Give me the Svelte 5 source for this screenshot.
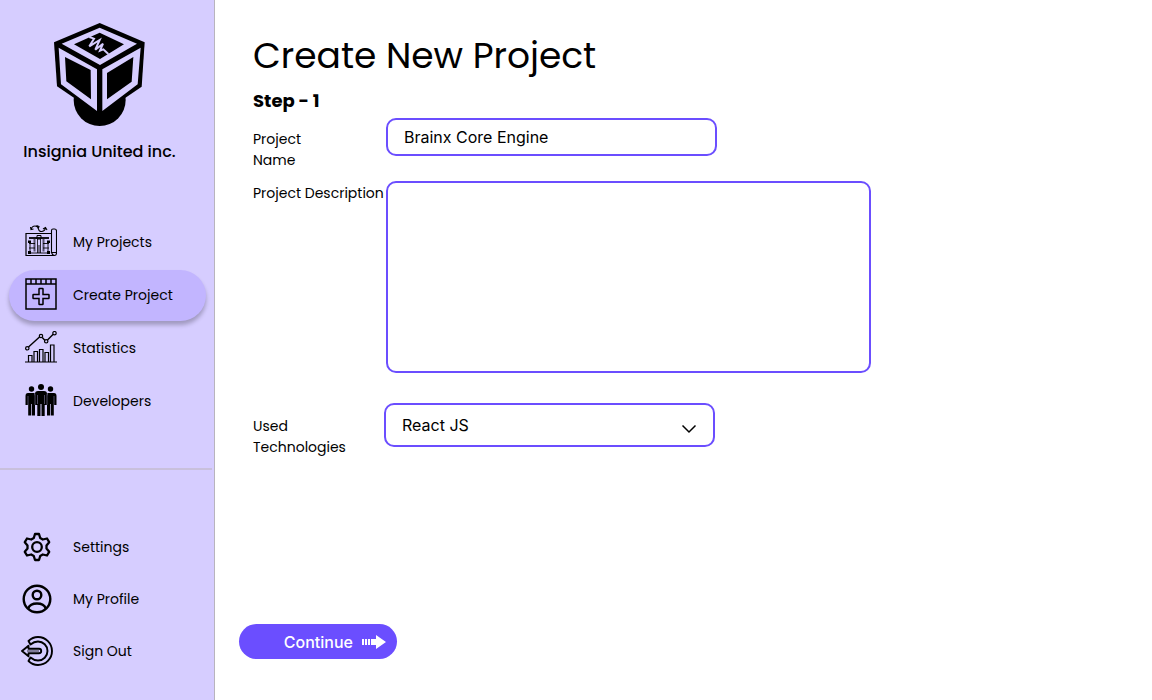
<script>
  let name = $state('Brainx Core Engine');
  let description = $state('');
  let technology = $state('React JS');
  const main = [
    { id: 'projects', label: 'My Projects' },
    { id: 'create', label: 'Create Project', active: true },
    { id: 'stats', label: 'Statistics' },
    { id: 'devs', label: 'Developers' }
  ];
  const account = [
    { id: 'settings', label: 'Settings' },
    { id: 'profile', label: 'My Profile' },
    { id: 'signout', label: 'Sign Out' }
  ];
</script>

{#snippet icon(id)}
  {#if id === 'projects'}
    <svg class="icon" viewBox="0 0 32 32" fill="none" stroke="#000">
      <path d="M26 8.500H1v22h28.500M1 27.500" stroke-width="1.200" />
      <path d="M26.500 27.500V5.500q0-1.500 1.500-1.500h1.500q2 0 2 2v22q0 2.500-2 2.500t-3-3h4.500" stroke-width="1.100" />
      <path d="M6 4.500Q7 1 10 1t3.500 3 3.500 2.500 3.500-3.500M5.500 2l.5 2.500 2.500-.5M18 4l2.500-1.500L22 5M11.500.500l2.500 1-1 2.500" stroke-width="1.100" />
      <path d="M4 13h20" stroke-width="1.800" />
      <path d="M12 10.500h4V14h-4z" />
      <path d="M9.500 14v12.500M18.500 14v12.500" stroke="#55506a" stroke-width="2" />
      <path d="M12.500 14v14M15.500 14v14" stroke-width=".8" />
      <path d="M14 20v8" stroke="#77718d" stroke-width="2" />
      <path d="M4 18.500h6M18 18.500h6M4 23h6M18 23h6M4 28h20M5 18.500v9M23 18.500v9" stroke-width=".9" />
      <path d="M3 15.500h3V18H3zM22 15.500h3V18h-3zM3 26h3v3H3zM22 26h3v3h-3z" fill="#000" stroke="none" />
    </svg>
  {:else if id === 'create'}
    <svg class="icon" viewBox="0 0 32 32" fill="none" stroke="#000" stroke-width="1.500">
      <path d="M1 1h30v30H1zM1 6h30M6 1v5M11 1v5M16 1v5M21 1v5M26 1v5" />
      <path d="M14.500 10.500h3q.5 0 .5.5v5.500h5.500q.5 0 .5.500v3q0 .5-.5.5H18V26q0 .5-.5.5h-3q-.5 0-.5-.5v-5.500H8.500Q8 20.500 8 20v-3q0-.5.5-.5H14V11q0-.5.5-.5z" />
    </svg>
  {:else if id === 'stats'}
    <svg class="icon" viewBox="0 0 32 32" fill="none" stroke="#000" stroke-width="1.200">
      <path d="M0 31h32M3.500 31v-6.500H7V31M9 31V20.500h3.500V31M14.500 31V18.500H18V31M20 31v-9.500h3.500V31M25.500 31V14H29v17" />
      <path d="M3.500 16L14.500 6M17.300 6.500l2.700 3M22.500 9l5.700-5.800" stroke-width="1.400" />
      <circle cx="2.300" cy="17.300" r="1.700" /><circle cx="16" cy="5" r="1.700" />
      <circle cx="21.200" cy="10.300" r="1.700" /><circle cx="29.500" cy="2.200" r="1.700" />
    </svg>
  {:else if id === 'devs'}
    <svg class="icon" viewBox="0 0 32 32">
      <circle cx="6.500" cy="5" r="2.700" /><circle cx="25.500" cy="5" r="2.700" /><circle cx="16" cy="3" r="3" />
      <path d="M3 9h6.500l.5 3v19.500H7V20h-.7v11.500H3.200V20H2.800v1H.5V12Q.5 9 3 9zM22.500 9H29q2.500 0 2.500 3v9h-2.300v-1h-.4v11.500h-3.100V20H25v11.500h-3V12z" />
      <path d="M13 7h6q3 0 3 3v11h-2.300v11h-3.200V20h-1v12h-3.200V21H10V10q0-3 3-3z" />
      <path d="M3 12v8M29 12v8M12.500 11v9M19.500 11v9M10 10v11M22 10v11" stroke="#8279a5" stroke-width=".6" />
    </svg>
  {:else if id === 'settings'}
    <svg class="icon" viewBox="0 0 32 32" fill="none" stroke="#000" stroke-width="2.300" stroke-linejoin="round">
      <circle cx="16" cy="16" r="4.800" />
      <path d="M14 3h4l1.200 4 2.600 1.500 4.200-1 2.200 3.700L25.500 14.500v3l2.700 3.300-2.200 3.700-4.200-1-2.600 1.500-1.200 4h-4l-1.200-4-2.600-1.500-4.200 1-2.200-3.700 2.700-3.300v-3l-2.700-3.300L6 7.500l4.200 1L12.800 7z" />
    </svg>
  {:else if id === 'profile'}
    <svg class="icon" viewBox="0 0 32 32" fill="none" stroke="#000" stroke-width="2.400">
      <circle cx="16" cy="16" r="13.300" /><circle cx="16" cy="12" r="4.300" />
      <path d="M7.200 25.500Q9 20.500 16 20.500t8.800 5" />
    </svg>
  {:else}
    <svg class="icon" viewBox="0 0 32 32" fill="none" stroke="#000" stroke-width="1.900" stroke-linejoin="round">
      <path d="M7.500 6Q11.500 2 17 2a14 14 0 1 1 0 28Q11.500 30 7.500 26l2-3.500Q13 25.500 17 25.500a9.500 9.500 0 1 0 0-19Q13 6.500 9.500 9.500z" />
      <path d="M7.500 10.700L1 16l6.500 5.300V18.200H18a2.200 2.200 0 0 0 0-4.400H7.500z" />
      <path d="M6 16h12" stroke-width=".8" />
    </svg>
  {/if}
{/snippet}

{#snippet links(items)}
  <ul>
    {#each items as item}
      <li>
        <a href={'#' + item.id} class:active={item.active} aria-current={item.active ? 'page' : undefined}>
          {@render icon(item.id)}
          <span>{item.label}</span>
        </a>
      </li>
    {/each}
  </ul>
{/snippet}

<div class="app">
  <aside>
    <div class="brand">
      <svg viewBox="43 24 273 309" width="91" height="103" aria-hidden="true">
        <circle cx="180" cy="255" r="78" />
        <path d="M180 24l135 58-9 133-126 86L52 214 43 82z" />
        <path fill="#d6cdff" fill-rule="evenodd" d="M180 38l112 48-111 64L66 86zM180 53l-77 35 78 44 72-44z" />
        <path fill="#d6cdff" fill-rule="evenodd" d="M57 98l115 65v125L64 208zM76 126l4 73 74 54-1-88z" />
        <path fill="#d6cdff" fill-rule="evenodd" d="M303 98l-115 65v125l106-80zM281 126l-79 48v79l74-53z" />
        <path fill="none" stroke="#d6cdff" stroke-width="6" d="M149 66l14 5-14 23 31-19-13 29 23-18-9 21 10-4 15 14" />
      </svg>
      <strong>Insignia United inc.</strong>
    </div>
    <nav aria-label="Main">{@render links(main)}</nav>
    <hr />
    <nav class="account" aria-label="Account">{@render links(account)}</nav>
  </aside>

  <main>
    <form onsubmit={(e) => e.preventDefault()}>
      <h1>Create New Project</h1>
      <h2>Step - 1</h2>
      <div class="row">
        <label for="name">Project<br />Name</label>
        <input id="name" type="text" bind:value={name} />
      </div>
      <div class="row description">
        <label for="description">Project Description</label>
        <textarea id="description" bind:value={description}></textarea>
      </div>
      <div class="row technologies">
        <label for="technology">Used<br />Technologies</label>
        <div class="select">
          <select id="technology" bind:value={technology}>
            <option>React JS</option>
          </select>
          <svg viewBox="0 0 16 10" width="16" height="10" aria-hidden="true"><path d="M1.500 1.500L8 8l6.500-6.500" fill="none" stroke="#000" stroke-width="1.500" /></svg>
        </div>
      </div>
      <button type="submit">
        Continue
        <svg viewBox="0 0 24 14" width="24" height="14" fill="#fff" aria-hidden="true"><path d="M0 4h2v6H0zM3 4h2v6H3zM6 4h2v6H6zM9 4h5V0l10 7-10 7v-4H9z" /></svg>
      </button>
    </form>
  </main>
</div>

<style>
  :global(body) { margin: 0; background: #fff; }
  * { box-sizing: border-box; }
  .app {
    display: flex;
    min-height: 100vh;
    font-family: Poppins, Inter, sans-serif;
    font-size: 14px;
    line-height: 21px;
    color: #000;
  }
  aside {
    flex: 0 0 215px;
    background: #d6cdff;
    border-right: 1px solid #b8b4bd;
  }
  .brand {
    display: flex;
    flex-direction: column;
    align-items: center;
    gap: 14px;
    padding: 23px 15px 53px 0;
  }
  .brand svg { display: block; }
  .brand strong { font-size: 16px; line-height: 24px; font-weight: 500; }
  ul {
    display: flex;
    flex-direction: column;
    gap: 2px;
    margin: 0;
    padding: 0 8px 0 9px;
    list-style: none;
  }
  a {
    display: flex;
    align-items: center;
    gap: 16px;
    height: 51px;
    padding: 0 16px;
    border-radius: 26px;
    color: #000;
    text-decoration: none;
  }
  a.active { background: #c2b5ff; box-shadow: 0 4px 4px rgba(0, 0, 0, 0.25); }
  .icon { flex: none; width: 32px; height: 32px; margin-bottom: 4px; }
  hr {
    height: 2px;
    margin: 41px 2px 52px 0;
    border: 0;
    background: #c9c0dc;
  }
  .account ul { gap: 1px; }
  .account a { padding-left: 12px; gap: 20px; }
  .account .icon { margin-bottom: 2px; }
  main { flex: 1; min-width: 0; padding: 29px 24px; }
  form { padding-left: 14px; }
  h1 { margin: 0; font-size: 36px; line-height: 54px; font-weight: 400; }
  h2 { margin: 4px 0; font-size: 18px; line-height: 27px; font-weight: 700; }
  .row { display: flex; align-items: flex-start; }
  label { flex: 0 0 133px; padding-top: 11px; white-space: nowrap; }
  input, textarea, select {
    display: block;
    border: 2px solid #6b4eff;
    border-radius: 10px;
    background: #fff;
    color: #000;
    font: 16px/24px Inter, sans-serif;
    padding: 0 16px;
    outline: none;
  }
  input { flex: 0 1 331px; min-width: 0; height: 38px; }
  .description { margin-top: 10px; }
  .description label { padding-top: 2px; }
  textarea { flex: 0 1 485px; min-width: 0; height: 192px; resize: none; padding: 8px 16px; }
  .technologies { margin-top: 30px; }
  .technologies label { flex-basis: 131px; padding-top: 13px; }
  .select { position: relative; flex: 0 1 331px; min-width: 0; }
  .select svg { position: absolute; right: 18px; top: 21px; pointer-events: none; }
  select { width: 100%; height: 44px; appearance: none; }
  button {
    display: flex;
    align-items: center;
    justify-content: flex-end;
    gap: 9px;
    width: 158px;
    height: 35px;
    margin: 166px 0 0 -14px;
    padding: 0 11px;
    border: 0;
    border-radius: 18px;
    background: #6b4eff;
    color: #fff;
    font: 500 16px/24px Inter, sans-serif;
  }
</style>
